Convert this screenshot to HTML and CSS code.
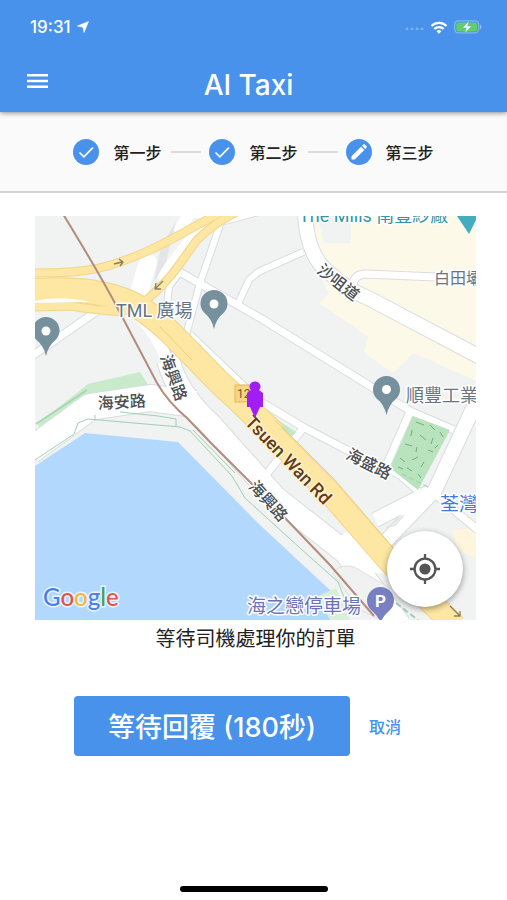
FILE: index.html
```html
<!DOCTYPE html>
<html lang="zh-Hant">
<head>
<meta charset="utf-8">
<meta name="viewport" content="width=device-width, initial-scale=1">
<title>AI Taxi</title>
<link rel="stylesheet" href="styles.css">
</head>
<body>
<div class="app">
  <header class="top">
    <div class="status">
      <div class="status-left">
        <time>19:31</time>
        <svg width="12" height="12" viewBox="0 0 12 12" aria-hidden="true"><path d="M11.5.5 7 11.600 6 6.200 .4 5z" fill="#fff" stroke="#fff" stroke-width=".6"/></svg>
      </div>
      <div class="status-right">
        <svg width="19" height="5" viewBox="0 0 19 5" aria-hidden="true"><g fill="#7db4f5"><circle cx="2" cy="4" r="1.500"/><circle cx="7" cy="4" r="1.500"/><circle cx="12" cy="4" r="1.500"/><circle cx="17" cy="4" r="1.500"/></g></svg>
        <svg width="18" height="13" viewBox="0 0 18 13" aria-hidden="true"><g fill="none" stroke="#fff" stroke-width="2.3"><path d="M1.5 5a10.6 10.6 0 0 1 15 0"/><path d="M4.3 8a6.6 6.6 0 0 1 9.4 0"/></g><path d="M9 12.7 6.5 10.2a3.6 3.6 0 0 1 5 0z" fill="#fff"/></svg>
        <svg width="28" height="14" viewBox="0 0 28 14" aria-hidden="true"><rect x=".7" y=".9" width="24" height="12" rx="3.6" fill="none" stroke="#7fb8ee" stroke-width="1.2"/><rect x="2.3" y="2.4" width="20.8" height="9" rx="2" fill="#60cf68"/><path d="M26 4.8v4.4q1.5-.6 1.5-2.2T26 4.8" fill="#8fc0f6"/><path d="M15.2.8 8.4 7.9h4l-1.7 5.4 6.9-7.2h-4z" fill="#fff" stroke="#5aa6c8" stroke-width=".5"/></svg>
      </div>
    </div>
    <div class="bar">
      <button class="menu" type="button" aria-label="選單"><svg width="21" height="14" viewBox="0 0 21 14"><path d="M0 1.3h21M0 7h21M0 12.7h21" stroke="#fff" stroke-width="2.4"/></svg></button>
      <h1>AI Taxi</h1>
    </div>
  </header>

  <ol class="steps">
    <li><svg class="dot" viewBox="0 0 26 26" aria-hidden="true"><circle cx="13" cy="13" r="13"/><path d="m6.5 13.5 4.4 4.3 9-9.2" fill="none" stroke="#fff" stroke-width="1.7"/></svg><span>第一步</span></li>
    <li><svg class="dot" viewBox="0 0 26 26" aria-hidden="true"><circle cx="13" cy="13" r="13"/><path d="m6.5 13.5 4.4 4.3 9-9.2" fill="none" stroke="#fff" stroke-width="1.7"/></svg><span>第二步</span></li>
    <li><svg class="dot" viewBox="0 0 26 26" aria-hidden="true"><circle cx="13" cy="13" r="13"/><path d="M5.5 20.5v-3.2l9.6-9.6 3.2 3.2-9.6 9.6zM16 6.8l1.4-1.4q.7-.6 1.4 0l1.8 1.8q.6.7 0 1.4L19.200 10z" fill="#fff"/></svg><span>第三步</span></li>
  </ol>

  <main>
    <div class="map">
      <svg class="map-art" viewBox="35 216 441 404" preserveAspectRatio="xMidYMid slice" role="img" aria-label="地圖">
        <rect x="35" y="216" width="441" height="404" fill="#f1f2f2"/>
        <path d="M317 216h159v165l-62-28-21 20-29-20 4-16-49-34 10-9-17-40z" fill="#fdf9e8"/>
        <path d="M317 216h34v27h-27z" fill="#f1f2f2"/>
        <path d="M452 530l24-2v30l-18-8z" fill="#fdf5dc"/>
        <path d="M35 466 85 433 178 442 260 525 332 592v28H35z" fill="#b3d8fd"/>
        <path d="M38 424 88 384 140 372 149 386 86 396 40 432z" fill="#c9ebcc"/>
        <path d="M318 596l18-8 14 32h-20z" fill="#d8efd9"/>

        <g fill="none" stroke-linejoin="round">
          <g stroke="#d9dddf">
            <path d="M32 356 97 311" stroke-width="9"/>
            <path d="M178 271 262 319 370 386 412 412 454 430" stroke-width="9"/>
            <path d="M200 283 221 222 262 211M200 283 186 335M180 272 169 286 167 306M237 306 249 280 258 272 303 252" stroke-width="8"/>
            <path d="M305 210Q306 258 332 275 344 288 370 299L480 357" stroke-width="16"/>
            <path d="M353 285Q354 274 366 274L480 279" stroke-width="9"/>
            <path d="M190 335 258 400 303 427 343 448 400 475 426 498M304 427 262 480M410 412 386 466" stroke-width="9"/>
            <path d="M478 398 435 490 385 542M375 520 430 492" stroke-width="16"/>
            <path d="M430 490 478 530" stroke-width="9"/>
            <path d="M30 451 90 407 150 398 195 404" stroke-width="28"/>
            <path d="M152 325Q164 345 170 370" stroke-width="14"/>
            <path d="M168 360Q178 395 210 424L276 498 345 552 400 625" stroke-width="24"/>
          </g>
          <g stroke="#fff">
            <path d="M32 356 97 311" stroke-width="7"/>
            <path d="M178 271 262 319 370 386 412 412 454 430" stroke-width="7"/>
            <path d="M200 283 221 222 262 211M200 283 186 335M180 272 169 286 167 306M237 306 249 280 258 272 303 252" stroke-width="6"/>
            <path d="M305 210Q306 258 332 275 344 288 370 299L480 357" stroke-width="14"/>
            <path d="M353 285Q354 274 366 274L480 279" stroke-width="7"/>
            <path d="M190 335 258 400 303 427 343 448 400 475 426 498M304 427 262 480M410 412 386 466" stroke-width="7"/>
            <path d="M478 398 435 490 385 542M375 520 430 492" stroke-width="14"/>
            <path d="M430 490 478 530" stroke-width="7"/>
            <path d="M30 451 90 407 150 398 195 404" stroke-width="26"/>
            <path d="M138 315Q164 340 170 375" stroke-width="12"/>
            <path d="M168 360Q178 395 210 424L276 498 345 552 400 625" stroke-width="22"/>
            <path d="M138 296 148 262" stroke-width="18" stroke-linecap="round"/>
            <path d="M178 233 190 212 212 212 160 280" stroke-width="12"/>
          </g>
          <path d="M330 546 348 530 392 574 345 572z" fill="#fff"/>
          <path d="M161 246 176 222 166 262 154 282" fill="#e4e5e6"/>
          <path d="M333 574Q338 563 354 567L390 588 382 620 360 610z" fill="#f0f1f1" stroke="#dde0e1"/>
          <path d="M386 528 404 515 396 525z" fill="#eceded" stroke="#dde0e1"/>
          <path d="M262 410 296 432 290 439 268 422z" fill="#c3e8c5"/>
          <g stroke="#f2d489">
            <path d="M30 273C90 274 112 267 150 250 180 236 190 228 222 212" stroke-width="9"/>
            <path d="M143 303C175 276 180 262 197 240 211 226 220 221 240 210" stroke-width="9"/>
            <path d="M30 307 70 306Q95 310 125 312" stroke-width="9"/>
            <path d="M30 291C75 287 110 292 135 305 165 323 180 343 220 383L275 434" stroke-width="25"/>
            <path d="M240 402 330 493 390 562 455 626" stroke-width="24"/>
          </g>
          <g stroke="#fee7a3">
            <path d="M30 273C90 274 112 267 150 250 180 236 190 228 222 212" stroke-width="7"/>
            <path d="M143 303C175 276 180 262 197 240 211 226 220 221 240 210" stroke-width="7"/>
            <path d="M30 307 70 306Q95 310 125 312" stroke-width="7"/>
            <path d="M30 291C75 287 110 292 135 305 165 323 180 343 220 383L275 434" stroke-width="23"/>
            <path d="M240 402 330 493 390 562 455 626" stroke-width="22"/>
          </g>
          <path d="M35 301Q60 295 90 302L35 303z" fill="#fff"/>
          <path d="M160 327 192 360M275 420 335 480 395 550" stroke="#f0cf7c"/>
          <path d="M114 264 122 262M119 259 123 262 120 266M163 281 156 288M156 283 155 289 161 289M450 606 460 616M460 611V616H454" stroke="#8b7d5b" stroke-width="1.300"/>
          <path d="M35 460 74 434 78 423 88 419 180 427 190 431 232 476 245 498 300 548 338 582 346 602M95 415V419M120 412 158 416 176 419V426M193 430 235 473" stroke="#9fd0b4"/>
          <path d="M396 603 418 620" stroke="#9ccfb3" stroke-width="2" stroke-dasharray="6 3"/>
          <path d="M36 424 87 390" stroke="#a4d8ae" stroke-width="2"/>
          <path d="M63 214C85 250 105 284 117 307L157 383Q168 402 187 418L210 442 253 485 287 520 330 565 374 616" stroke="#b28c7d" stroke-width="2"/>
        </g>
        <path d="M413 416 450 430 418 490 390 468z" fill="#b9e3bd"/>
        <path d="M416 422l8 3M430 425l5 5M440 432l3 5M412 430l-1 6M420 435l6 5M433 438l-2 6M405 444l7 2M417 447l-1 5M428 450l5 2M400 458l5 4M412 460l6-3M424 462l-3 5M407 468l5 3M418 474l3 4M438 445l-3 3M398 467l5 2" stroke="#72ad7c" fill="none"/>
        <path d="M402 474 430 488" stroke="#9bcfaa" stroke-dasharray="5 3"/>

        <g>
          <g fill="#76909d">
            <path d="M214 329Q212 319 204 312.500A13.500 13.500 0 1 1 224 312.500Q216 319 214 329z"/>
            <path d="M46 356Q44 346 36 339.500A13.500 13.500 0 1 1 56 339.500Q48 346 46 356z"/>
            <path d="M386.500 415Q384 404 376.500 398.500A13.500 13.500 0 1 1 396.500 398.500Q389 404 386.500 415z"/>
          </g>
          <g fill="#fff"><circle cx="214" cy="304" r="4.500"/><circle cx="46" cy="331" r="4.500"/><circle cx="386.500" cy="389.500" r="4.500"/></g>
          <path d="M457 216h21l-9 18z" fill="#43adc0"/>
          <path d="M380.500 622Q378 616 371 610A13.500 13.500 0 1 1 390 610Q383 616 380.500 622z" fill="#7880c3"/>
        </g>
        <rect x="235" y="385" width="22" height="17" fill="#f7d681" stroke="#dfb95c"/>

        <g class="labels">
          <text class="shield" font-size="12" x="237" y="398">12</text>
          <text class="place" x="116" y="317" font-size="18">TML 廣場</text>
          <text class="place" x="406" y="402" font-size="18">順豐工業</text>
          <text class="place" x="434" y="284" font-size="16">白田壩</text>
          <text class="teal" x="299" y="222" font-size="18">The Mills 南豐紗廠</text>
          <text class="parking" x="247" y="613" font-size="19">海之戀停車場</text>
          <text class="blue" x="440" y="511" font-size="19">荃灣西</text>
          <text class="road" font-size="16" transform="translate(98 409) rotate(-3)">海安路</text>
          <text class="road" font-size="16" transform="translate(160 357) rotate(70)">海興路</text>
          <text class="road" font-size="16" transform="translate(248 487) rotate(48)">海興路</text>
          <text class="road" font-size="16" transform="translate(345 458) rotate(27)">海盛路</text>
          <text class="road" font-size="16" transform="translate(316 272) rotate(38)">沙咀道</text>
          <text class="highway" font-size="18" transform="translate(244 423) rotate(46)">Tsuen Wan Rd</text>
          <text class="park-p" x="380.500" y="607" font-size="17" text-anchor="middle">P</text>
        </g>
        <path d="M255 381.500a5 5 0 0 1 4 8.500l4 3v14h-3l-5 11-5-11h-3v-14l4-3a5 5 0 0 1 4-8.500z" fill="#a21df5"/>
        <text class="brand" x="43" y="606" font-size="24"><tspan fill="#4a80ea">G</tspan><tspan fill="#df5348">o</tspan><tspan fill="#f2b934">o</tspan><tspan fill="#4a80ea">g</tspan><tspan fill="#3ba35a">l</tspan><tspan fill="#df5348">e</tspan></text>
      </svg>
      <button class="locate" type="button" aria-label="我的位置"><svg width="30" height="30" viewBox="0 0 30 30"><g fill="none" stroke="#555" stroke-width="2.300"><circle cx="15" cy="15" r="10.400"/><path d="M15 0v5M15 25v5M0 15h5M25 15h5"/></g><circle cx="15" cy="15" r="5.600" fill="#555"/></svg></button>
    </div>
    <p class="message">等待司機處理你的訂單</p>
    <div class="actions">
      <button class="wait" type="button">等待回覆 (180秒)</button>
      <button class="cancel" type="button">取消</button>
    </div>
  </main>
  <div class="home"></div>
</div>
</body>
</html>
```
FILE: styles.css
```css
* {
  box-sizing: border-box;
}

body {
  margin: 0;
  background: #fff;
  color: #222;
  font-family: Inter, "Noto Sans CJK TC", sans-serif;
}

button {
  border: 0;
  padding: 0;
  background: none;
  font: inherit;
}

svg {
  display: block;
}

.app {
  display: flex;
  flex-direction: column;
  min-height: 100vh;
}

.top {
  position: relative;
  height: 112px;
  background: #4992eb;
  color: #fff;
  box-shadow: 0 1px 5px rgba(0, 0, 0, 0.45);
}

.status {
  display: flex;
  justify-content: space-between;
  align-items: center;
  height: 54px;
  padding: 0 25px 0 30px;
}

.status-left,
.status-right {
  display: flex;
  align-items: center;
}

.status-left {
  gap: 6px;
  font-size: 17px;
  font-weight: 500;
}

.status-right {
  gap: 6px;
}

.bar {
  display: grid;
  grid-template-columns: 48px 1fr 58px;
  align-items: center;
  height: 58px;
}

.menu {
  display: flex;
  justify-content: flex-end;
  padding-bottom: 4px;
}

h1 {
  margin: 0;
  padding-top: 4px;
  text-align: center;
  font-size: 28px;
  line-height: 54px;
  font-weight: 500;
}

.steps {
  display: flex;
  justify-content: center;
  align-items: center;
  height: 81px;
  margin: 0;
  padding: 0;
  list-style: none;
  background: #fafafa;
  border-bottom: 2px solid #d4d4d4;
  font-size: 16px;
  font-weight: 500;
}

.steps li {
  display: flex;
  align-items: center;
  gap: 14px;
}

.steps li + li::before {
  content: "";
  width: 30px;
  height: 2px;
  margin: 0 -6px 0 10px;
  background: #dcdcdc;
}

.dot {
  width: 26px;
  height: 26px;
  fill: #4992eb;
}

main {
  flex: 1;
  padding: 23px 31px 0 35px;
}

.map {
  position: relative;
  aspect-ratio: 441 / 404;
}

.map-art {
  width: 100%;
  height: 100%;
}

.labels text {
  font-family: Roboto, "Noto Sans CJK TC", sans-serif;
  paint-order: stroke;
  stroke: #fff;
  stroke-width: 3px;
  stroke-linejoin: round;
}

.labels .road {
  fill: #4b4f52;
  font-weight: 500;
}

.labels .shield {
  fill: #6b5a38;
  stroke: none;
}

.labels .place {
  fill: #66757f;
}

.labels .teal {
  fill: #3594a3;
}

.labels .parking {
  fill: #6c72ba;
}

.labels .blue {
  fill: #4478da;
}

.labels .highway {
  fill: #5f3a20;
  stroke: #fff3cc;
  font-weight: 500;
}

.labels .park-p {
  fill: #fff;
  stroke: none;
  font-weight: 700;
}

.brand {
  font-family: Lato, sans-serif;
  font-weight: 500;
  paint-order: stroke;
  stroke: #e9f4ff;
  stroke-width: 3px;
}

.locate {
  position: absolute;
  right: 13px;
  bottom: 13px;
  display: grid;
  place-items: center;
  width: 76px;
  height: 76px;
  border-radius: 50%;
  background: #fff;
  box-shadow: 0 2px 6px rgba(0, 0, 0, 0.4);
}

.message {
  margin: 0;
  text-align: center;
  font-size: 20px;
  line-height: 38px;
}

.actions {
  display: flex;
  justify-content: center;
  padding-top: 38px;
}

.wait {
  width: 276px;
  height: 60px;
  padding-bottom: 2px;
  border-radius: 4px;
  background: #4992eb;
  color: #fff;
  font-size: 27px;
  font-weight: 500;
}

.cancel {
  padding: 0 36px 0 19px;
  color: #4992eb;
  font-size: 16px;
  font-weight: 500;
}

.home {
  align-self: center;
  width: 148px;
  height: 6px;
  margin-bottom: 8px;
  border-radius: 3px;
  background: #000;
}
```
